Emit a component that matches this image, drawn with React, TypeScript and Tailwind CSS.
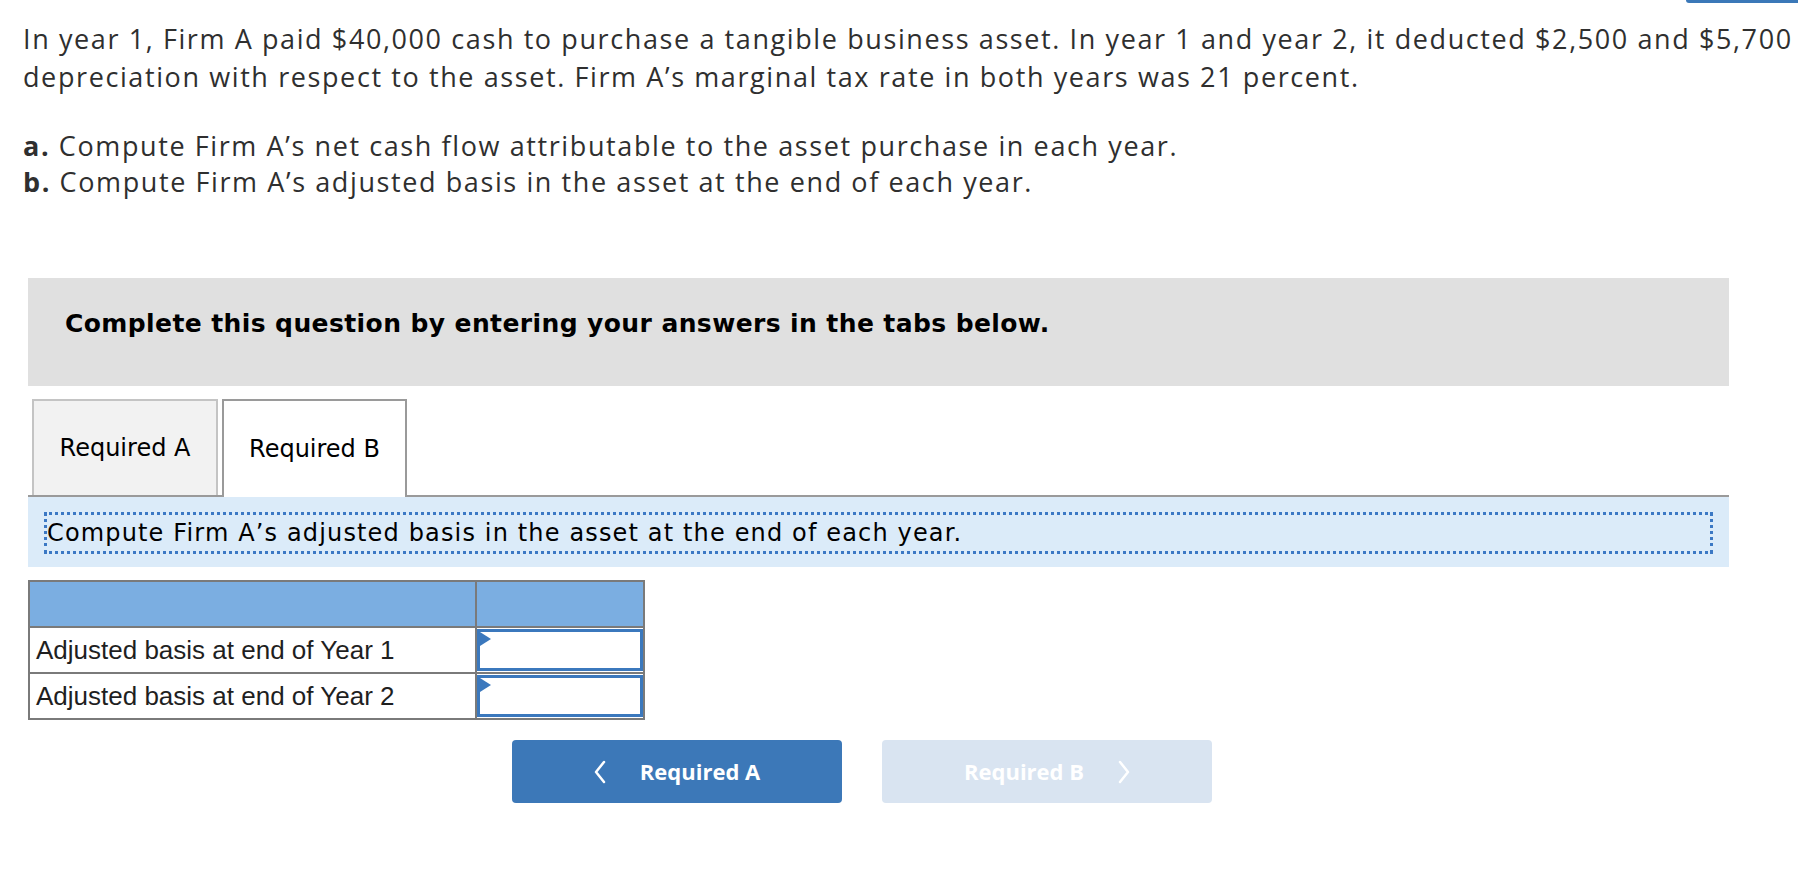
import React from "react";

const sans = { fontFamily: "'Open Sans', Lato, sans-serif" };
const verdana = { fontFamily: "'DejaVu Sans', Verdana, sans-serif" };

function ChevronLeft() {
  return (
    <svg width="12" height="24" viewBox="0 0 12 24" fill="none">
      <polyline points="10,2 2,12 10,22" stroke="white" strokeWidth="2.5" strokeLinecap="round" strokeLinejoin="round" />
    </svg>
  );
}

function ChevronRight() {
  return (
    <svg width="12" height="24" viewBox="0 0 12 24" fill="none">
      <polyline points="2,2 10,12 2,22" stroke="white" strokeWidth="2.5" strokeLinecap="round" strokeLinejoin="round" />
    </svg>
  );
}

function AnswerCell() {
  return (
    <td className="border-2 border-[#7a7a7a] p-0 h-[46px]">
      <div className="relative h-[42px] border-[3px] border-[#3b78bd] bg-white">
        <svg className="absolute left-0 top-0" width="11" height="14" viewBox="0 0 11 14">
          <polygon points="0,0 11,7 0,14" fill="#3b78bd" />
        </svg>
      </div>
    </td>
  );
}

const rows = ["Adjusted basis at end of Year 1", "Adjusted basis at end of Year 2"];

export default function App() {
  return (
    <div className="w-[1798px] h-[892px] bg-white overflow-hidden text-[#2f2f2f]">
      <div className="flex justify-end">
        <div className="h-[3px] w-[112px] bg-[#3b78b8] rounded-bl-[8px]" />
      </div>

      <div className="pl-[23px] pt-[17px] text-[27px] leading-[38px] tracking-[1.6px] whitespace-nowrap" style={sans}>
        <p>
          In year 1, Firm A paid $40,000 cash to purchase a tangible business asset. In year 1 and year 2, it deducted $2,500 and $5,700
          <br />
          depreciation with respect to the asset. Firm A’s marginal tax rate in both years was 21 percent.
        </p>
        <p className="mt-[32px] leading-[36px]">
          <span className="font-bold">a.</span> Compute Firm A’s net cash flow attributable to the asset purchase in each year.
          <br />
          <span className="font-bold">b.</span> Compute Firm A’s adjusted basis in the asset at the end of each year.
        </p>
      </div>

      <div className="ml-[28px] w-[1701px]">
        <div className="mt-[78px] h-[108px] bg-[#e0e0e0] pl-[37px] pt-[27px]">
          <p className="text-[25px] tracking-[0.4px] font-bold text-black" style={verdana}>
            Complete this question by entering your answers in the tabs below.
          </p>
        </div>

        <div className="mt-[13px] flex items-end pl-[4px] gap-[4px]" style={verdana}>
          <div className="w-[186px] h-[96px] bg-[#f2f2f2] border-2 border-[#c4c4c4] border-b-0 flex items-center justify-center text-[24px] text-black">
            Required A
          </div>
          <div className="w-[185px] h-[98px] -mb-[2px] bg-white border-2 border-[#9a9a9a] border-b-0 flex items-center justify-center text-[24px] text-black relative z-10">
            Required B
          </div>
        </div>
        <div className="border-t-2 border-[#9a9a9a] bg-[#dbebf9] h-[72px] px-[16px] pt-[15px]">
          <div
            className="border-[3px] border-dotted border-[#3b78c4] h-[42px] flex items-center text-[24px] tracking-[1.15px] text-black"
            style={verdana}
          >
            Compute Firm A’s adjusted basis in the asset at the end of each year.
          </div>
        </div>

        <table className="mt-[13px] border-collapse" style={{ fontFamily: "'Liberation Sans', Arial, sans-serif" }}>
          <thead>
            <tr className="bg-[#7baee1] h-[46px]">
              <th className="w-[447px] border-2 border-[#7a7a7a]" />
              <th className="w-[168px] border-2 border-[#7a7a7a]" />
            </tr>
          </thead>
          <tbody>
            {rows.map((r) => (
              <tr key={r} className="h-[46px]">
                <td className="border-2 border-[#7a7a7a] pl-[6px] text-[26px] text-[#1f1f1f] whitespace-nowrap">{r}</td>
                <AnswerCell />
              </tr>
            ))}
          </tbody>
        </table>

        <div className="mt-[20px] ml-[484px] flex gap-[40px]" style={sans}>
          <button className="w-[330px] h-[63px] rounded-[4px] bg-[#3c78b8] text-white text-[22px] font-bold flex items-center justify-center gap-[34px]">
            <ChevronLeft />
            <span>Required A</span>
          </button>
          <button className="w-[330px] h-[63px] rounded-[4px] bg-[#d9e4f1] text-white text-[22px] font-bold flex items-center justify-center gap-[34px]">
            <span>Required B</span>
            <ChevronRight />
          </button>
        </div>
      </div>
    </div>
  );
}
